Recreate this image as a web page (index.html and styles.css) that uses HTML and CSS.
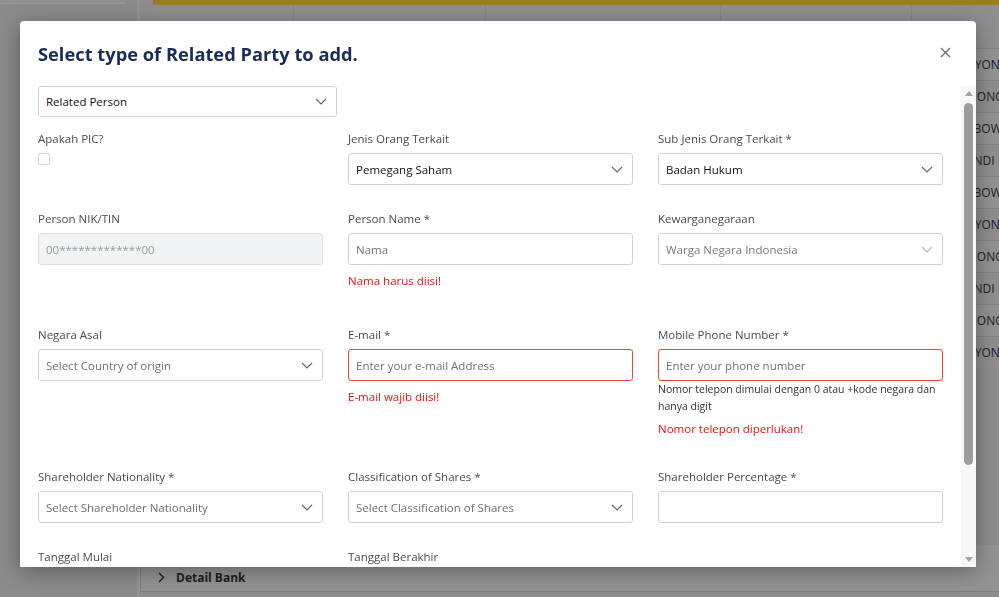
FILE: index.html
```html
<!DOCTYPE html>
<html lang="id">
<head>
  <meta charset="UTF-8">
  <meta name="viewport" content="width=device-width, initial-scale=1.0">
  <title>Related Party</title>
  <link rel="stylesheet" href="styles.css">
</head>
<body>
  <div class="page">
    <aside class="sidebar">
      <div class="sidebar-card"></div>
    </aside>
    <main class="main">
      <div class="table">
        <div class="table-head">
          <div class="cell"></div><div class="cell"></div><div class="cell"></div><div class="cell"></div><div class="cell"></div>
        </div>
        <div class="table-row"><div class="cell"></div><div class="cell"></div><div class="cell"></div><div class="cell"></div><div class="cell name">DYONO</div></div>
        <div class="table-row"><div class="cell"></div><div class="cell"></div><div class="cell"></div><div class="cell"></div><div class="cell name">MONO</div></div>
        <div class="table-row"><div class="cell"></div><div class="cell"></div><div class="cell"></div><div class="cell"></div><div class="cell name">ABOWO</div></div>
        <div class="table-row"><div class="cell"></div><div class="cell"></div><div class="cell"></div><div class="cell"></div><div class="cell name">ANDI</div></div>
        <div class="table-row"><div class="cell"></div><div class="cell"></div><div class="cell"></div><div class="cell"></div><div class="cell name">ABOWO</div></div>
        <div class="table-row"><div class="cell"></div><div class="cell"></div><div class="cell"></div><div class="cell"></div><div class="cell name">DYONO</div></div>
        <div class="table-row"><div class="cell"></div><div class="cell"></div><div class="cell"></div><div class="cell"></div><div class="cell name">MONO</div></div>
        <div class="table-row"><div class="cell"></div><div class="cell"></div><div class="cell"></div><div class="cell"></div><div class="cell name">ANDI</div></div>
        <div class="table-row"><div class="cell"></div><div class="cell"></div><div class="cell"></div><div class="cell"></div><div class="cell name">MONO</div></div>
        <div class="table-row"><div class="cell"></div><div class="cell"></div><div class="cell"></div><div class="cell"></div><div class="cell name">DYONO</div></div>
      </div>
      <div class="panel">
        <svg class="panel-chevron" width="7" height="11" viewBox="0 0 7 11"><path d="M1 1l4.5 4.5L1 10" fill="none" stroke="#1e1e1e" stroke-width="1.4"/></svg>
        <span>Detail Bank</span>
      </div>
    </main>
  </div>

  <div class="modal">
    <div class="modal-header">
      <h2 class="modal-title">Select type of Related Party to add.</h2>
      <button class="modal-close" type="button">
        <svg width="11" height="11" viewBox="0 0 11 11"><path d="M1 1l9 9M10 1l-9 9" stroke="#5f6f82" stroke-width="1.3"/></svg>
      </button>
    </div>

    <div class="modal-body">
      <div class="modal-content">
        <div class="select select-type">
          <span class="value">Related Person</span>
          <svg class="chevron" width="12" height="7" viewBox="0 0 12 7"><path d="M1 1l5 5 5-5" fill="none" stroke="#666" stroke-width="1.2"/></svg>
        </div>

        <div class="form-row first">
          <div class="field">
            <label>Apakah PIC?</label>
            <span class="checkbox"></span>
          </div>
          <div class="field">
            <label>Jenis Orang Terkait</label>
            <div class="select">
              <span class="value">Pemegang Saham</span>
              <svg class="chevron" width="12" height="7" viewBox="0 0 12 7"><path d="M1 1l5 5 5-5" fill="none" stroke="#666" stroke-width="1.2"/></svg>
            </div>
          </div>
          <div class="field">
            <label>Sub Jenis Orang Terkait *</label>
            <div class="select">
              <span class="value">Badan Hukum</span>
              <svg class="chevron" width="12" height="7" viewBox="0 0 12 7"><path d="M1 1l5 5 5-5" fill="none" stroke="#666" stroke-width="1.2"/></svg>
            </div>
          </div>
        </div>

        <div class="form-row">
          <div class="field">
            <label>Person NIK/TIN</label>
            <div class="input disabled">00*************00</div>
          </div>
          <div class="field">
            <label>Person Name *</label>
            <div class="input placeholder">Nama</div>
            <div class="error">Nama harus diisi!</div>
          </div>
          <div class="field">
            <label>Kewarganegaraan</label>
            <div class="select muted">
              <span class="value">Warga Negara Indonesia</span>
              <svg class="chevron" width="12" height="7" viewBox="0 0 12 7"><path d="M1 1l5 5 5-5" fill="none" stroke="#b5b5b5" stroke-width="1.2"/></svg>
            </div>
          </div>
        </div>

        <div class="form-row">
          <div class="field">
            <label>Negara Asal</label>
            <div class="select placeholder">
              <span class="value">Select Country of origin</span>
              <svg class="chevron" width="12" height="7" viewBox="0 0 12 7"><path d="M1 1l5 5 5-5" fill="none" stroke="#666" stroke-width="1.2"/></svg>
            </div>
          </div>
          <div class="field">
            <label>E-mail *</label>
            <div class="input placeholder invalid">Enter your e-mail Address</div>
            <div class="error">E-mail wajib diisi!</div>
          </div>
          <div class="field">
            <label>Mobile Phone Number *</label>
            <div class="input placeholder invalid">Enter your phone number</div>
            <div class="help">Nomor telepon dimulai dengan 0 atau +kode negara dan hanya digit</div>
            <div class="error">Nomor telepon diperlukan!</div>
          </div>
        </div>

        <div class="form-row">
          <div class="field">
            <label>Shareholder Nationality *</label>
            <div class="select placeholder">
              <span class="value">Select Shareholder Nationality</span>
              <svg class="chevron" width="12" height="7" viewBox="0 0 12 7"><path d="M1 1l5 5 5-5" fill="none" stroke="#666" stroke-width="1.2"/></svg>
            </div>
          </div>
          <div class="field">
            <label>Classification of Shares *</label>
            <div class="select placeholder">
              <span class="value">Select Classification of Shares</span>
              <svg class="chevron" width="12" height="7" viewBox="0 0 12 7"><path d="M1 1l5 5 5-5" fill="none" stroke="#666" stroke-width="1.2"/></svg>
            </div>
          </div>
          <div class="field">
            <label>Shareholder Percentage *</label>
            <div class="input"></div>
          </div>
        </div>

        <div class="form-row">
          <div class="field">
            <label>Tanggal Mulai</label>
            <div class="input"></div>
          </div>
          <div class="field">
            <label>Tanggal Berakhir</label>
            <div class="input"></div>
          </div>
          <div class="field"></div>
        </div>
      </div>

      <div class="scrollbar">
        <div class="sb-arrow up"></div>
        <div class="sb-track"><div class="sb-thumb"></div></div>
        <div class="sb-arrow down"></div>
      </div>
    </div>
  </div>
</body>
</html>
```

FILE: styles.css
```css
body {
  margin: 0;
  font-family: 'Open Sans', 'Noto Sans', Arial, sans-serif;
  background-color: #8d8d8d;
  color: #1e1e1e;
  overflow: hidden;
}

/* dimmed page behind the modal */
.page {
  display: flex;
  height: 597px;
}
.sidebar {
  width: 137px;
  border-right: 3px solid #959595;
  background-color: #8b8b8b;
}
.sidebar-card {
  width: 125px;
  height: 3px;
  border-bottom: 1px solid #9a9a9a;
  background-color: #919191;
}
.main {
  flex: 1;
  display: flex;
  flex-direction: column;
}
.table {
  margin-left: 13px;
}
.table-head,
.table-row {
  display: grid;
  grid-template-columns: 140px 192px 235px 191px 1fr;
}
.table-head {
  height: 43px;
  border-top: 5px solid #9a7c2c;
  background-color: #8f8f8f;
}
.table-row {
  height: 31px;
  border-top: 1px solid #828282;
  background-color: #8e8e8e;
}
.table-row:nth-child(even) {
  background-color: #929292;
}
.cell {
  border-left: 1px solid #858585;
}
.cell:first-child {
  border-left: none;
}
.cell.name {
  padding-left: 54px;
  font-size: 12px;
  line-height: 31px;
  white-space: nowrap;
  overflow: hidden;
}
.panel {
  margin-top: 177px;
  height: 47px;
  display: flex;
  align-items: center;
  gap: 11px;
  padding: 18px 0 0 17px;
  box-sizing: border-box;
  border-left: 1px solid #7d7d7d;
  border-bottom: 1px solid #7d7d7d;
  background-color: #939393;
  font-size: 12px;
  font-weight: 700;
}

/* modal */
.modal {
  position: fixed;
  left: 20px;
  top: 21px;
  width: 956px;
  height: 546px;
  background: #fff;
  border-radius: 4px 4px 0 0;
  box-shadow: 0 4px 22px rgba(0,0,0,0.35);
  display: flex;
  flex-direction: column;
}
.modal-header {
  display: flex;
  justify-content: space-between;
  align-items: flex-start;
  height: 65px;
  padding: 19px 25px 0 18px;
  box-sizing: border-box;
}
.modal-title {
  margin: 0;
  font-size: 18.3px;
  line-height: 28px;
  font-weight: 700;
  color: #1c2b58;
}
.modal-close {
  border: none;
  background: none;
  padding: 0;
  margin-top: 7px;
  cursor: pointer;
  line-height: 0;
}
.modal-body {
  flex: 1;
  display: flex;
  min-height: 0;
}
.modal-content {
  flex: 1;
  padding: 0 18px;
  overflow: hidden;
}

/* form */
.form-row {
  display: grid;
  grid-template-columns: repeat(3, 1fr);
  column-gap: 25px;
  margin-bottom: 24px;
}
.form-row.first {
  margin-top: 12px;
}
.field label {
  display: block;
  font-size: 11.5px;
  line-height: 20px;
  color: #4a4a4a;
  margin-bottom: 4px;
}
.select,
.input {
  height: 32px;
  box-sizing: border-box;
  border: 1px solid #cfd3d9;
  border-radius: 3px;
  padding: 0 9px 0 7px;
  display: flex;
  align-items: center;
  justify-content: space-between;
  font-size: 11.5px;
  color: #111;
  background: #fff;
}
.select-type {
  width: 299px;
  height: 31px;
}
.select.placeholder,
.input.placeholder {
  color: #707070;
}
.select.muted {
  color: #7a7a7a;
}
.input.disabled {
  background-color: #f2f3f5;
  border-color: #dcdfe3;
  color: #9a9a9a;
}
.input.invalid {
  border-color: #f0413f;
}
.checkbox {
  display: block;
  width: 10px;
  height: 10px;
  border: 1px solid #d3d3d3;
  border-radius: 2px;
}
.error {
  font-size: 11.5px;
  line-height: 20px;
  color: #f20d0d;
  margin: 6px 0 10px;
}
.help {
  font-size: 10.5px;
  line-height: 17px;
  color: #333;
}
.help + .error {
  margin: 4px 0 4px;
}

/* scrollbar */
.scrollbar {
  width: 15px;
  display: flex;
  flex-direction: column;
  background-color: #f7f7f7;
}
.sb-arrow {
  height: 15px;
  display: flex;
  align-items: center;
  justify-content: center;
}
.sb-arrow::before {
  content: '';
  border-left: 4px solid transparent;
  border-right: 4px solid transparent;
}
.sb-arrow.up::before {
  border-bottom: 5px solid #a3a3a3;
}
.sb-arrow.down::before {
  border-top: 5px solid #a3a3a3;
}
.sb-track {
  flex: 1;
  padding-top: 2px;
}
.sb-thumb {
  width: 9px;
  height: 362px;
  margin: 0 auto;
  border-radius: 5px;
  background-color: #9c9c9c;
}
```
